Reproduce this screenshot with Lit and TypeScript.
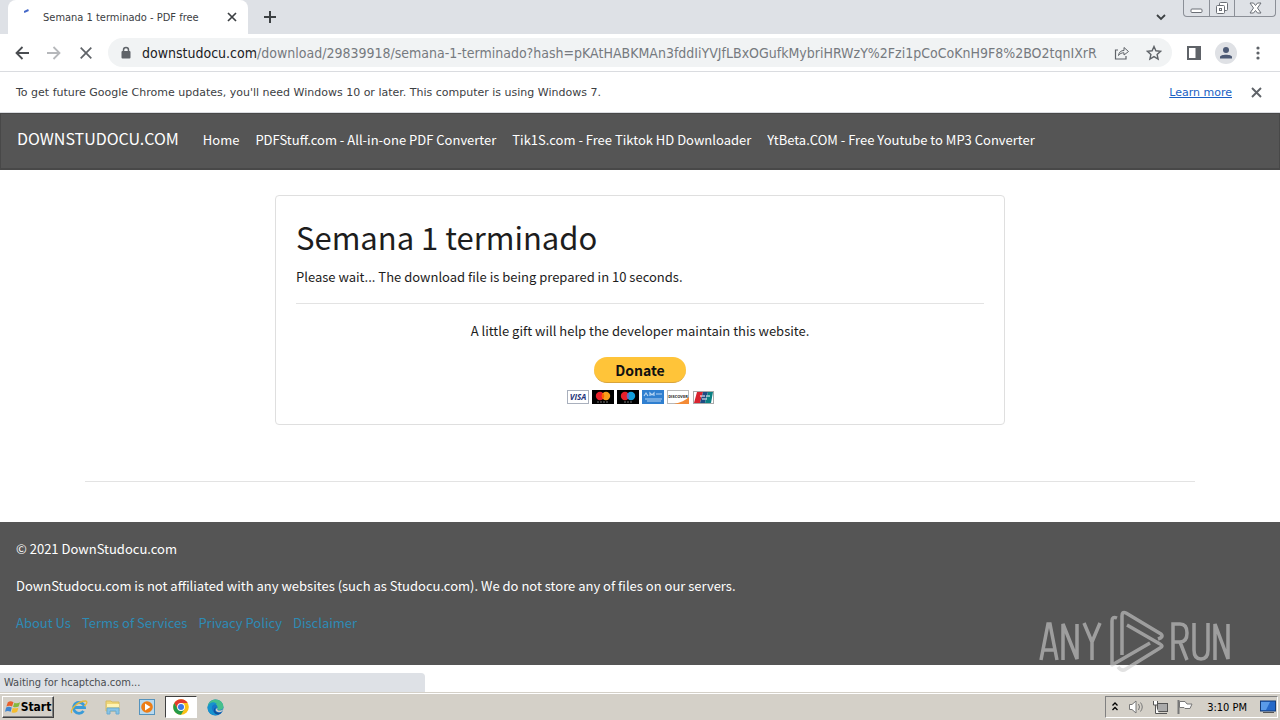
import { LitElement, html, svg, css } from "lit";
import { customElement } from "lit/decorators.js";

const navLinks = [
  "Home",
  "PDFStuff.com - All-in-one PDF Converter",
  "Tik1S.com - Free Tiktok HD Downloader",
  "YtBeta.COM - Free Youtube to MP3 Converter",
];
const footerLinks = ["About Us", "Terms of Services", "Privacy Policy", "Disclaimer"];

@customElement("browser-chrome")
export class BrowserChrome extends LitElement {
  static styles = css`
    :host { display: block; font-family: "DejaVu Sans Condensed", "Noto Sans", sans-serif; color: #3c4043; }
    * { box-sizing: border-box; }
    button { border: 0; background: none; padding: 0; margin: 0; color: inherit; font: inherit; display: grid; place-items: center; }
    svg { display: block; }
    .tabs { display: flex; height: 34px; background: #dee1e6; }
    .tab { display: flex; align-items: center; width: 240px; margin-left: 8px; padding: 0 8px 0 16px; border-radius: 8px 8px 0 0; background: #fff; font-size: 11px; }
    .spin { width: 19px; height: 34px; }
    .title { flex: 1; white-space: nowrap; }
    .close { width: 16px; height: 16px; }
    .new { width: 28px; margin-left: 8px; }
    .spacer { flex: 1; }
    .chev { width: 28px; margin-right: 8px; }
    .win { display: flex; height: 17px; margin-right: 4px; border: 1px solid #8b8f97; border-top: 0; border-radius: 0 0 4px 4px; color: #6b6f76; }
    .win button { width: 25px; }
    .win button + button { border-left: 1px solid #8b8f97; }
    .win button:last-child { width: 41px; }
    .bar { display: flex; align-items: center; height: 38px; padding: 0 8px; border-bottom: 1px solid #dadce0; color: #5f6368; }
    .bar > button { width: 28px; height: 28px; margin-right: 4px; }
    .bar > .side { margin-left: 8px; }
    .bar > .menu { margin-right: 0; }
    .omni { flex: 1; min-width: 0; display: flex; align-items: center; height: 29px; margin-left: 4px; padding: 0 6px 0 12px; border-radius: 15px; background: #f1f3f4; gap: 8px; }
    .lock { margin-right: 2px; }
    .url { flex: 1; min-width: 0; overflow: hidden; white-space: nowrap; font-size: 14px; color: #767a7f; }
    .url b { font-weight: 400; color: #202124; }
    .omni button { width: 24px; height: 24px; }
    .info { display: flex; align-items: center; height: 41px; padding: 0 16px; border-bottom: 1px solid #dadce0; font-family: "DejaVu Sans", sans-serif; font-size: 11px; }
    .info p { flex: 1; margin: 0; }
    .info a { color: #1a5fc4; margin-right: 16px; }
  `;

  render() {
    return html`
      <div class="tabs">
        <div class="tab">
          <svg class="spin" viewBox="0 0 19 34"><path d="M0 12 L4.500 10" stroke="#4468c8" stroke-width="2" fill="none"/></svg>
          <span class="title">Semana 1 terminado - PDF free</span>
          <button class="close" aria-label="Close tab"><svg width="10" height="10"><path d="M1 1 9 9M9 1 1 9" stroke="#3c4043" stroke-width="1.700"/></svg></button>
        </div>
        <button class="new" aria-label="New tab"><svg width="12" height="12"><path d="M6 0V12M0 6H12" stroke="#3c4043" stroke-width="2"/></svg></button>
        <span class="spacer"></span>
        <button class="chev" aria-label="Search tabs"><svg width="10" height="7"><path d="M1 1 5 5 9 1" fill="none" stroke="#3c4043" stroke-width="1.800"/></svg></button>
        <div class="win">
          <button aria-label="Minimize"><svg width="13" height="14"><rect x="1" y="8" width="11" height="3.500" rx="1" fill="#fff" stroke="currentColor"/></svg></button>
          <button aria-label="Restore"><svg width="14" height="14"><g fill="#fff" stroke="currentColor"><rect x="4.500" y="1.500" width="8" height="8" rx="1"/><rect x="1.500" y="4.500" width="8" height="8" rx="1"/><rect x="4.500" y="7.500" width="2" height="2"/></g></svg></button>
          <button aria-label="Close"><svg width="13" height="12"><path d="M1 1H4.500L6.500 3.500 8.500 1H12L8.500 6 12 11H8.500L6.500 8.500 4.500 11H1L4.500 6Z" fill="#fff" stroke="currentColor"/></svg></button>
        </div>
      </div>
      <div class="bar">
        <button aria-label="Back"><svg width="14" height="14"><path d="M14 7H1.500M7.500 1 1.500 7 7.500 13" fill="none" stroke="#4a4d51" stroke-width="1.800"/></svg></button>
        <button aria-label="Forward"><svg width="14" height="14"><path d="M0 7H12.500M6.500 1 12.500 7 6.500 13" fill="none" stroke="#b6b8bb" stroke-width="1.800"/></svg></button>
        <button aria-label="Stop"><svg width="12" height="12"><path d="M.7 .7 11.300 11.300M11.300 .7 .7 11.300" stroke="#5f6368" stroke-width="1.700"/></svg></button>
        <div class="omni">
          <svg class="lock" width="12" height="14"><path d="M3.500 6V4a2.500 2.500 0 0 1 5 0V6" fill="none" stroke="#5f6368" stroke-width="1.500"/><rect x="1.500" y="5" width="9" height="7.500" rx="1" fill="#5f6368"/></svg>
          <span class="url"><b>downstudocu.com</b>/download/29839918/semana-1-terminado?hash=pKAtHABKMAn3fddIiYVJfLBxOGufkMybriHRWzY%2Fzi1pCoCoKnH9F8%2BO2tqnIXrR</span>
          <button aria-label="Share"><svg width="16" height="14"><path d="M4 4H1.500V13H12V10" fill="none" stroke="currentColor" stroke-width="1.200"/><path d="M4.500 9.500C5 6 7 4.500 10 4.500V1.500L14.500 5.500 10 9V6.800C7.500 6.800 6 7.500 4.500 9.500Z" fill="none" stroke="currentColor"/></svg></button>
          <button aria-label="Bookmark"><svg width="16" height="16"><path d="M8 1.500 9.900 5.800 14.600 6.300 11.100 9.400 12.100 14 8 11.600 3.900 14 4.900 9.400 1.400 6.300 6.100 5.800Z" fill="none" stroke="currentColor" stroke-width="1.400"/></svg></button>
        </div>
        <button class="side" aria-label="Side panel"><svg width="14" height="14"><rect x="1" y="1" width="12" height="12" fill="none" stroke="currentColor" stroke-width="2"/><rect x="8.500" y="1" width="5" height="12" fill="currentColor"/></svg></button>
        <button class="profile" aria-label="Profile"><svg width="22" height="22"><circle cx="11" cy="11" r="11" fill="#dfe1e5"/><circle cx="11" cy="8" r="3" fill="#4d5a75"/><path d="M5 16.500V15C5 12 17 12 17 15V16.500Z" fill="#4d5a75"/></svg></button>
        <button class="menu" aria-label="Menu"><svg width="4" height="14"><g fill="currentColor"><circle cx="2" cy="2" r="1.600"/><circle cx="2" cy="7" r="1.600"/><circle cx="2" cy="12" r="1.600"/></g></svg></button>
      </div>
      <div class="info">
        <p>To get future Google Chrome updates, you'll need Windows 10 or later. This computer is using Windows 7.</p>
        <a href="#">Learn more</a>
        <button class="close" aria-label="Dismiss"><svg width="11" height="11"><path d="M1 1 10 10M10 1 1 10" stroke="#5f6368" stroke-width="1.900"/></svg></button>
      </div>
    `;
  }
}

const cards = [
  svg`<rect x=".5" y=".5" width="21" height="13" fill="#fff" stroke="#a9b0bd"/><text x="11" y="10" text-anchor="middle" font-size="8" font-weight="700" font-style="italic" font-family="Open Sans, sans-serif" fill="#26337a">VISA</text>`,
  svg`<rect width="22" height="14" fill="#000"/><circle cx="8" cy="6" r="4.200" fill="#e8202a"/><circle cx="14" cy="6" r="4.200" fill="#f79e1b"/><path d="M11 3a4.200 4.200 0 0 1 0 6a4.200 4.200 0 0 1 0-6" fill="#ff5f00"/><path d="M5 12H17" stroke="#777" stroke-dasharray="2 1"/>`,
  svg`<rect width="22" height="14" fill="#000"/><circle cx="8" cy="6" r="4.200" fill="#e8202a"/><circle cx="14" cy="6" r="4.200" fill="#139fdc"/><path d="M11 3a4.200 4.200 0 0 1 0 6a4.200 4.200 0 0 1 0-6" fill="#6c6bbd"/><path d="M7 12H15" stroke="#777" stroke-dasharray="2 1"/>`,
  svg`<rect width="22" height="14" fill="#2f7fd0"/><path d="M2 6 4 3 6 6M8 6V3L10 5 12 3V6M3 9H20M5 11H19M14 4H20" stroke="#b5d4f2" stroke-width="1.200" fill="none"/>`,
  svg`<rect x=".5" y=".5" width="21" height="13" fill="#fff" stroke="#b8b8b8"/><path d="M22 7V14H7Q17 12 22 7" fill="#f38a35"/><text x="11" y="7.500" text-anchor="middle" font-size="4" font-weight="700" font-family="Open Sans, sans-serif" fill="#222">DISCOVER</text>`,
  svg`<rect x="1.500" y="1.500" width="20" height="12" fill="#fff" stroke="#aaa"/><path d="M5 2H11L8 13H2Z" fill="#d8232f"/><path d="M11 2H16L13 13H8Z" fill="#1f4b83"/><path d="M16 2H21L19 13H13Z" fill="#0a8083"/><path d="M8 6H13M14 6H18M10 9H15" stroke="#fff"/>`,
];

@customElement("download-page")
export class DownloadPage extends LitElement {
  static styles = css`
    :host { display: block; background: #fff; color: #1d1d1d; font: 13px/21px "Noto Sans CJK SC", sans-serif; }
    * { box-sizing: border-box; }
    a { text-decoration: none; }
    p { margin: 0; }
    nav { display: flex; align-items: baseline; height: 57px; padding: 14px 16px; gap: 16px; background: #555; border: 1px solid #484848; border-bottom-width: 2px; white-space: nowrap; }
    nav a { color: #fff; }
    nav .brand { font-size: 16px; margin-right: 8px; }
    main { padding: 25px 85px 40px; }
    .card { max-width: 730px; margin: 0 auto; padding: 20px; border: 1px solid #dfdfdf; border-radius: 4px; }
    h1 { margin: 0 0 8px; font-size: 31px; line-height: 42px; font-weight: 400; }
    hr { height: 1px; margin: 16px 0; border: 0; background: #e3e3e3; }
    .gift { text-align: center; }
    .donate { display: block; margin: 16px auto 7px; width: 92px; height: 26px; border: 0; border-bottom: 1px solid #d9a43a; border-radius: 13px; padding: 0; background: #ffc439; color: #111; font: 700 14px/24px "Noto Sans CJK SC", sans-serif; }
    .cards { display: flex; justify-content: center; gap: 3px; }
    .rule { max-width: 1110px; margin: 56px auto 0; }
    footer { height: 143px; padding: 16px; background: #555; color: #fff; }
    footer p { margin-bottom: 16px; }
    footer a { color: #2d8bb5; margin-right: 11px; }
  `;

  render() {
    return html`
      <nav><a class="brand" href="#">DOWNSTUDOCU.COM</a>${navLinks.map((t) => html`<a href="#">${t}</a>`)}</nav>
      <main>
        <section class="card">
          <h1>Semana 1 terminado</h1>
          <p>Please wait... The download file is being prepared in 10 seconds.</p>
          <hr />
          <p class="gift">A little gift will help the developer maintain this website.</p>
          <button class="donate">Donate</button>
          <div class="cards">${cards.map((c) => html`<svg width="22" height="14" viewBox="0 0 22 14">${c}</svg>`)}</div>
        </section>
        <hr class="rule" />
      </main>
      <footer>
        <p>© 2021 DownStudocu.com</p>
        <p>DownStudocu.com is not affiliated with any websites (such as Studocu.com). We do not store any of files on our servers.</p>
        <p>${footerLinks.map((t) => html`<a href="#">${t}</a>`)}</p>
      </footer>
    `;
  }
}

@customElement("task-bar")
export class TaskBar extends LitElement {
  static styles = css`
    :host { display: flex; align-items: center; height: 26px; padding: 0 2px; background: #d4d0c8; border-top: 1px solid #fff; box-shadow: 0 -1px #d4d0c8; font: 11px "DejaVu Sans Condensed", sans-serif; color: #000; }
    * { box-sizing: border-box; }
    button { display: grid; place-items: center; width: 32px; height: 22px; padding: 0; margin: 0 1px; border: 0; background: none; color: inherit; font: inherit; }
    svg { display: block; }
    .start { display: flex; align-items: center; justify-content: center; width: 52px; margin: 0 8px 0 0; border: 1px solid; border-color: #fff #404040 #404040 #fff; box-shadow: inset -1px -1px #808080; font-weight: 700; font-size: 12px; }
    .active { background: #fff; border: 1px solid; border-color: #404040 #fff #fff #404040; }
    .spacer { flex: 1; }
    .tray { display: flex; align-items: center; height: 22px; padding: 0 1px 0 5px; gap: 6px; border: 1px solid; border-color: #808080 #fff #fff #808080; }
    .more { margin-right: 3px; }
    .tray span { margin: 0 7px; white-space: nowrap; }
  `;

  render() {
    return html`
      <button class="start"><svg width="16" height="16" viewBox="0 0 17 16"><path d="M3 3Q6 1 9 3L7.500 7.500Q5 6 1.500 7.500Z" fill="#e8602c"/><path d="M10 3.500Q13 5 16 3L14.500 7.500Q11.500 9 8.500 7.800Z" fill="#84b93c"/><path d="M1.200 8.500Q4 7 7.200 8.500L6 13Q3 11.500 0 13Z" fill="#3f86d0"/><path d="M8.200 9Q11 10 14.200 8.800L13 13Q10 15 7 13.500Z" fill="#f5bd2d"/></svg>Start</button>
      <button aria-label="Internet Explorer"><svg width="18" height="18"><path d="M4 9.500H14.500A5.500 5.500 0 1 0 13.500 13" fill="none" stroke="#399bd8" stroke-width="2.800"/><path d="M2 15C-1 13 7 3 16 3C18 4 16 7 14 8" fill="none" stroke="#e5b93d" stroke-width="1.300"/></svg></button>
      <button aria-label="Explorer"><svg width="18" height="18"><path d="M2 3H7L8 4H15V13H2Z" fill="#f0d778" stroke="#d6bb62"/><path d="M3 6H15V9H3Z" fill="#fff3b3"/><path d="M3 16V10H15V16H12V13H6V16Z" fill="#88c4e6" stroke="#6aabd2"/></svg></button>
      <button aria-label="Media Player"><svg width="16" height="16"><rect x=".5" y=".5" width="15" height="15" fill="#b8d9ef" stroke="#5593bd"/><circle cx="8" cy="8" r="5.800" fill="#ed7d16"/><path d="M6 4.500 11.500 8 6 11.500Z" fill="#fff"/></svg></button>
      <button class="active" aria-label="Chrome"><svg width="16" height="16" viewBox="-8 -8 16 16"><circle r="7.800" fill="#fbc116"/><path d="M-6.750-3.900A7.800 7.800 0 0 1 6.750-3.900H0L-3.400 2Z" fill="#e33b2e"/><path d="M-6.750-3.900A7.800 7.800 0 0 0 0 7.800L3.400 2-3.400 2Z" fill="#249a48"/><circle r="3.900" fill="#fff"/><circle r="3" fill="#3b78e7"/></svg></button>
      <button aria-label="Edge"><svg width="17" height="17" viewBox="0 0 17 17"><circle cx="8.500" cy="8.500" r="8" fill="#1676c9"/><path d="M.7 8C1 3 5 .5 8.500 .5C14 .5 17 5 16.300 8.500C15.500 12 9 11.500 10.500 9C11 6 8 4 5 4.500Q2 5 .7 8Z" fill="#46c08d"/><path d="M.7 8C2 3 7 2 10 5Q4 5 5 10Q6 15 12 15.500C5 18 0 13 .7 8Z" fill="#1793ce"/><path d="M9 8C6 12 10 15 15 13Q12 17 8 14.500Q5 11 9 8Z" fill="#12509b"/><path d="M10.500 9C9 12 14 12.500 16.300 10L15.500 12Q12 14.500 9 12Q8 10 10.500 9Z" fill="#d4d0c8"/></svg></button>
      <span class="spacer"></span>
      <div class="tray">
        <svg class="more" width="8" height="12"><path d="M1.500 4.500 4 2 6.500 4.500M1.500 9 4 6.500 6.500 9" fill="none" stroke="#000" stroke-width="1.300"/></svg>
        <svg width="18" height="16"><path d="M1.500 5.500H4L8 2V14L4 10.500H1.500Z" fill="#fff" stroke="#777"/><path d="M10.500 5Q12.500 8 10.500 11M12.500 3.500Q16 8 12.500 12.500" fill="none" stroke="#777"/></svg>
        <svg width="18" height="16"><rect x="5.500" y="4.500" width="10" height="8" fill="#aaa" stroke="#555"/><path d="M7 14.500H15M1.500 2V6H5.500V2M3.500 6V14.500H7" fill="#fff" stroke="#555"/></svg>
        <svg width="18" height="16"><path d="M2.500 1V15" stroke="#777" stroke-width="2"/><path d="M3.500 2.500H9L11 5H16L14 9.500H9L8 8.500H3.500Z" fill="#fff" stroke="#777"/></svg>
        <span>3:10 PM</span>
        <svg width="16" height="14"><rect x=".5" y="1" width="15" height="10" fill="#2569c9" stroke="#153d79"/><path d="M1 2H10L6 10H1Z" fill="#5a9be8"/><path d="M3 12.500H14" stroke="#555"/></svg>
      </div>
    `;
  }
}

@customElement("app-root")
export class AppRoot extends LitElement {
  static styles = css`
    :host { display: flex; flex-direction: column; min-height: 100vh; background: #fff; position: relative; overflow: hidden; }
    .spacer { flex: 1; }
    .status { box-sizing: border-box; width: 425px; height: 20px; padding: 0 4px; border-radius: 0 4px 0 0; background: #dee1e6; font: 11px/20px "DejaVu Sans Condensed", sans-serif; color: #4a4d51; }
    .mark { position: absolute; right: 48px; bottom: 44px; opacity: 0.6; }
  `;

  render() {
    return html`
      <browser-chrome></browser-chrome>
      <download-page></download-page>
      <div class="spacer"></div>
      <div class="status">Waiting for hcaptcha.com...</div>
      <task-bar></task-bar>
      <svg class="mark" width="194" height="68" viewBox="0 0 194 68" fill="none" stroke="#d0d0d0" stroke-width="3.500">
        <path d="M3 52 10 16H12L19 52M6 42H16M25 52V16L39 51V16M46 15 54 34 62 15M54 34V52"/>
        <path d="M135 52V16H142Q149 16 149 25Q149 34 142 34H135M142 34 149 52M156 15V42Q156 51 163 51Q170 51 170 42V15M177 52V16L190 51V16"/>
        <path d="M79 10Q74 8 74 13V57L112 35M84 47V8Q84 3 88 5L123 26Q126 29 120 31M89 17 122 36Q126 38 122 40L88 61Q84 64 80 59" stroke-linejoin="round"/>
      </svg>
    `;
  }
}
